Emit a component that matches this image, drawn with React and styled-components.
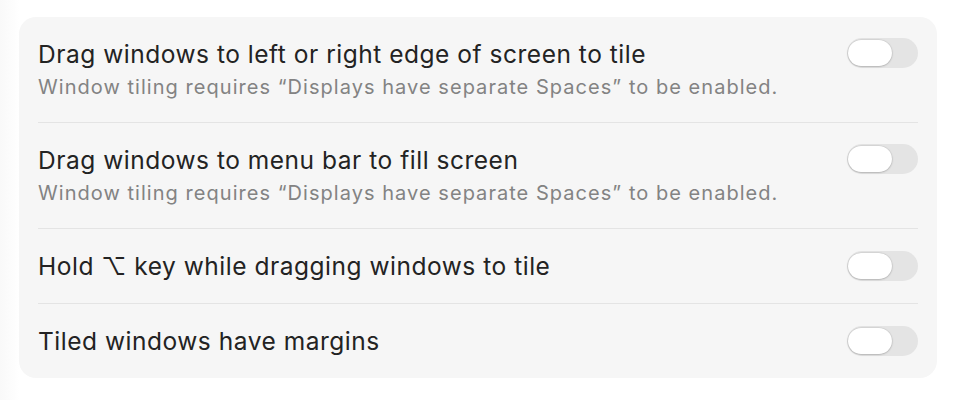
import React from "react";
import styled, { createGlobalStyle } from "styled-components";

const Global = createGlobalStyle`
  html, body { margin: 0; padding: 0; background: #ffffff; }
  body { font-family: Inter, "Noto Sans", "DejaVu Sans", sans-serif; -webkit-font-smoothing: antialiased; }
`;

const Page = styled.div`
  width: 964px;
  height: 400px;
  box-sizing: border-box;
  padding: 17px 27px 0 19px;
  background: linear-gradient(to right, #f9f9f9 0, #fdfdfd 14px, #ffffff 19px);
`;

const Card = styled.div`
  background: #f6f6f6;
  border-radius: 17px;
  padding: 0 19px;
  display: flex;
  flex-direction: column;
`;

const Row = styled.div`
  display: flex;
  align-items: ${(p) => (p.$sub ? "flex-start" : "center")};
  justify-content: space-between;
  padding: ${(p) => (p.$sub ? "22px 0 23px" : "22px 0")};
  & + & { border-top: 1px solid #e4e4e4; }
`;

const Texts = styled.div`
  display: flex;
  flex-direction: column;
  gap: 6px;
`;

const Title = styled.div`
  font-size: 24.5px;
  line-height: 30px;
  color: #232323;
  letter-spacing: 0.52px;
`;

const Sub = styled.div`
  font-size: 20px;
  line-height: 24px;
  color: #838383;
  letter-spacing: 1.04px;
`;

const Track = styled.div`
  flex: none;
  width: 71px;
  height: 30px;
  border-radius: 15px;
  background: #e4e4e4;
  position: relative;
  margin-top: ${(p) => (p.$sub ? "-1px" : "0")};
`;

const Knob = styled.div`
  position: absolute;
  left: 1px;
  top: 2px;
  width: 44px;
  height: 26px;
  border-radius: 13px;
  background: #ffffff;
  box-shadow: 0 0.5px 2px rgba(0, 0, 0, 0.28), 0 0 0 0.5px rgba(0, 0, 0, 0.05);
`;

const Toggle = ({ sub }) => (
  <Track $sub={sub}>
    <Knob />
  </Track>
);

const SUB = "Window tiling requires \u201CDisplays have separate Spaces\u201D to be enabled.";

const items = [
  { title: "Drag windows to left or right edge of screen to tile", sub: SUB },
  { title: "Drag windows to menu bar to fill screen", sub: SUB },
  { title: "Hold \u2325 key while dragging windows to tile" },
  { title: "Tiled windows have margins" },
];

export default function App() {
  return (
    <>
      <Global />
      <Page>
        <Card>
          {items.map((it) => (
            <Row key={it.title} $sub={!!it.sub}>
              <Texts>
                <Title>{it.title}</Title>
                {it.sub && <Sub>{it.sub}</Sub>}
              </Texts>
              <Toggle sub={!!it.sub} />
            </Row>
          ))}
        </Card>
      </Page>
    </>
  );
}
